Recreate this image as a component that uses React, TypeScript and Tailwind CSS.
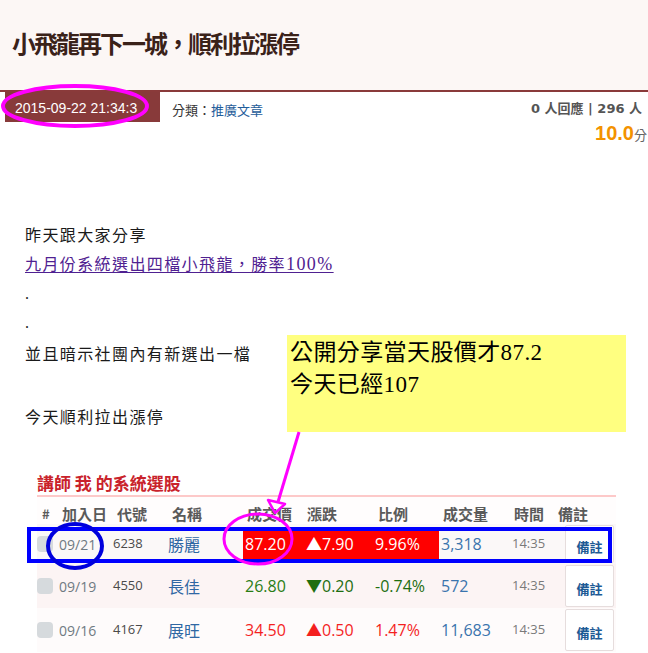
import React from "react";

type Row = {
  date: string;
  code: string;
  name: string;
  price: string;
  chg: string;
  pct: string;
  vol: string;
  time: string;
  kind: "hl" | "green" | "red";
  bg: string;
  h: string;
};

const rows: Row[] = [
  { date: "09/21", code: "6238", name: "勝麗", price: "87.20", chg: "▲7.90", pct: "9.96%", vol: "3,318", time: "14:35", kind: "hl", bg: "bg-[#fbf8f8]", h: "h-[40px]" },
  { date: "09/19", code: "4550", name: "長佳", price: "26.80", chg: "▼0.20", pct: "-0.74%", vol: "572", time: "14:35", kind: "green", bg: "bg-[#fcf4f4]", h: "h-[44px]" },
  { date: "09/16", code: "4167", name: "展旺", price: "34.50", chg: "▲0.50", pct: "1.47%", vol: "11,683", time: "14:35", kind: "red", bg: "bg-[#fefbfb]", h: "h-[44px]" },
];

function TableRow({ r }: { r: Row }) {
  const numColor =
    r.kind === "hl" ? "text-white bg-[#ff0000] h-[29px]" : r.kind === "green" ? "text-[#2a7d14]" : "text-[#f41f1f]";
  const chgColor =
    r.kind === "hl" ? "text-white bg-[#ff0000] h-[29px]" : r.kind === "green" ? "text-[#1e6e10]" : "text-[#f41f1f]";
  return (
    <div
      className={`grid grid-cols-[22px_53px_54px_77px_61px_68px_67px_71px_48px_58px] ${r.h} items-center ${r.bg} font-['Open_Sans','Noto_Sans_CJK_TC',sans-serif]`}
    >
      <div className="flex items-center">
        <div className="w-[16px] h-[16px] rounded-[4px] bg-[#d6dadd]" />
      </div>
      <div className="text-[14px] text-[#707a82]">{r.date}</div>
      <div className="pl-[1px] text-[13px] text-[#4a4a4a]">{r.code}</div>
      <div className="pl-[2px] text-[16px] text-[#2f67a3] font-['Noto_Sans_CJK_TC',sans-serif]">{r.name}</div>
      <div className={`pl-[2px] text-[16px] flex items-center ${numColor}`}>{r.price}</div>
      <div className={`pl-[2px] text-[16px] flex items-center ${chgColor}`}>{r.chg}</div>
      <div className={`pl-[3px] text-[16px] flex items-center ${chgColor}`}>{r.pct}</div>
      <div className="pl-[2px] text-[16px] text-[#3a74ad]">{r.vol}</div>
      <div className="pl-[2px] text-[13px] text-[#7a7a7a]">{r.time}</div>
      <div className="h-full flex items-stretch py-[1px]">
        <div className="ml-[7px] w-[49px] bg-white border border-[#e6dddd] rounded-[2px] flex items-center justify-center pt-[6px] text-[13px] font-bold text-[#1d5a95] font-['Noto_Sans_CJK_TC',sans-serif]">
          備註
        </div>
      </div>
    </div>
  );
}

export default function App() {
  return (
    <div className="relative w-[648px] h-[653px] overflow-hidden bg-white font-['Noto_Sans_CJK_TC',sans-serif]">
      {/* header */}
      <div className="h-[90px] bg-[#fcf7f5] pl-[12px] pt-[27px]">
        <h1 className="text-[24px] leading-[32px] font-bold tracking-[-2px] text-[#3a2219]">
          小飛龍再下一城，順利拉漲停
        </h1>
      </div>
      <div className="h-[2px] bg-[#8a3a3a]" />

      {/* meta row */}
      <div className="flex items-start">
        <div className="ml-[5px] w-[155px] h-[30px] bg-[#883a3a] text-white text-[14px] pl-[10px] pt-[3px] leading-[26px] font-['Liberation_Sans',sans-serif] whitespace-nowrap overflow-hidden">
          2015-09-22 21:34:3
        </div>
        <div className="ml-[12px] pt-[5px] leading-[26px] text-[13px] text-[#333]">
          分類：<span className="text-[#1f5d9a]">推廣文章</span>
        </div>
        <div className="ml-auto w-[117px] shrink-0 pt-[3px] whitespace-nowrap font-['DejaVu_Sans','Noto_Sans_CJK_TC',sans-serif]">
          <div className="leading-[28px] text-[13px] font-bold text-[#555]">0 人回應 | 296 人</div>
          <div className="leading-[20px] text-right pr-[1px] font-['Liberation_Sans','Noto_Sans_CJK_TC',sans-serif]">
            <span className="text-[20px] font-bold text-[#f39200]">10.0</span>
            <span className="text-[13px] text-[#666]">分</span>
          </div>
        </div>
      </div>

      {/* body text */}
      <div className="mt-[75px] pl-[25px] text-[16px] tracking-[1.4px] text-[#1a1a1a] font-['Liberation_Serif','Noto_Sans_CJK_TC',serif]">
        <div className="h-[29px] leading-[29px]">昨天跟大家分享</div>
        <div className="h-[29px] leading-[29px]">
          <span className="underline text-[#4f2191] decoration-1 underline-offset-2">
            九月份系統選出四檔小飛龍，勝率<span className="text-[18px]">100%</span>
          </span>
        </div>
        <div className="h-[29px] leading-[29px]">.</div>
        <div className="h-[29px] leading-[29px]">.</div>
        <div className="mt-[3px] h-[29px] leading-[29px]">並且暗示社團內有新選出一檔</div>
        <div className="h-[34px]" />
        <div className="h-[29px] leading-[29px]">今天順利拉出漲停</div>
      </div>

      {/* table image */}
      <div className="mt-[38px] ml-[37px] w-[579px]">
        <div className="h-[25px] leading-[25px] text-[17px] font-bold text-[#c9222b] border-b-2 border-[#fdc9c9] box-content">
          講師 我 的系統選股
        </div>
        <div className="grid grid-cols-[22px_53px_54px_77px_61px_68px_67px_71px_48px_58px] h-[27px] pt-[6px] leading-[21px] text-[15px] font-bold text-[#5a5a5a] bg-[#fffdfd]">
          <div className="pl-[5px] text-[13px]">#</div>
          <div className="pl-[3px] whitespace-nowrap">加入日</div>
          <div className="pl-[5px]">代號</div>
          <div className="pl-[6px]">名稱</div>
          <div className="pl-[4px] whitespace-nowrap">成交價</div>
          <div className="pl-[3px]">漲跌</div>
          <div className="pl-[6px]">比例</div>
          <div className="pl-[4px] whitespace-nowrap">成交量</div>
          <div className="pl-[4px]">時間</div>
          <div>備註</div>
        </div>
        {rows.map((r) => (
          <TableRow key={r.code} r={r} />
        ))}
      </div>

      {/* yellow callout */}
      <div className="absolute left-[287px] top-[335px] w-[339px] h-[97px] bg-[#ffff80] pl-[3px] pt-[2px] text-[23px] leading-[32px] tracking-[0.4px] text-black font-['Liberation_Serif','Noto_Sans_CJK_TC',serif]">
        <div>公開分享當天股價才87.2</div>
        <div>今天已經107</div>
      </div>

      {/* annotations */}
      <svg className="absolute left-0 top-0 pointer-events-none" width="648" height="653" viewBox="0 0 648 653">
        <ellipse cx="75" cy="106" rx="72" ry="20" fill="none" stroke="#ff00ff" strokeWidth="4" />
        <line x1="299" y1="432" x2="278" y2="502" stroke="#ff00ff" strokeWidth="3" />
        <polygon points="268,500 285,504 275,513" fill="none" stroke="#ff00ff" strokeWidth="2.5" strokeLinejoin="round" />
        <rect x="29" y="529" width="581" height="32" fill="none" stroke="#0000ff" strokeWidth="4" />
        <ellipse cx="258" cy="539" rx="34" ry="25" fill="none" stroke="#ff00ff" strokeWidth="3" />
        <ellipse cx="75" cy="546" rx="27" ry="22" fill="none" stroke="#0000dd" strokeWidth="4" />
      </svg>
    </div>
  );
}
